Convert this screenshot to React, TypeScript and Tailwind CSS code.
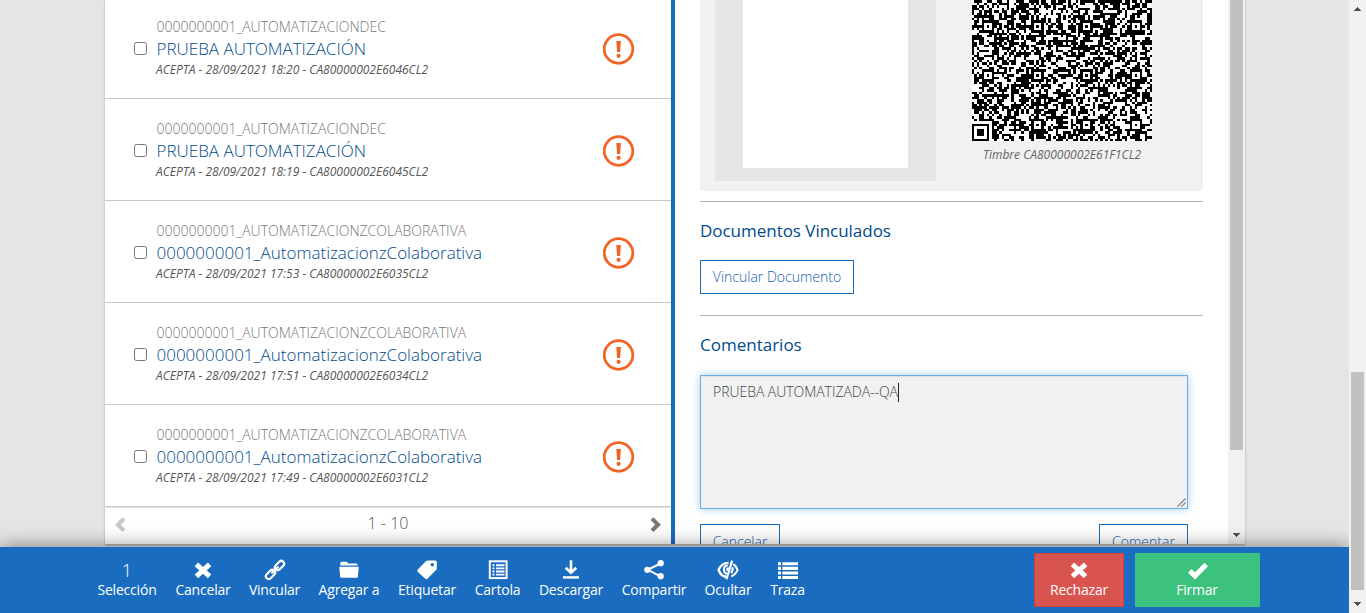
import type { ReactNode } from "react";

type Doc = { owner: string; title: string; meta: string };

const docs: Doc[] = [
  { owner: "0000000001_AUTOMATIZACIONDEC", title: "PRUEBA AUTOMATIZACIÓN", meta: "ACEPTA - 28/09/2021 18:20 - CA80000002E6046CL2" },
  { owner: "0000000001_AUTOMATIZACIONDEC", title: "PRUEBA AUTOMATIZACIÓN", meta: "ACEPTA - 28/09/2021 18:19 - CA80000002E6045CL2" },
  { owner: "0000000001_AUTOMATIZACIONZCOLABORATIVA", title: "0000000001_AutomatizacionzColaborativa", meta: "ACEPTA - 28/09/2021 17:53 - CA80000002E6035CL2" },
  { owner: "0000000001_AUTOMATIZACIONZCOLABORATIVA", title: "0000000001_AutomatizacionzColaborativa", meta: "ACEPTA - 28/09/2021 17:51 - CA80000002E6034CL2" },
  { owner: "0000000001_AUTOMATIZACIONZCOLABORATIVA", title: "0000000001_AutomatizacionzColaborativa", meta: "ACEPTA - 28/09/2021 17:49 - CA80000002E6031CL2" },
];

function AlertIcon() {
  return (
    <svg className="mt-[2px]" width="32" height="32" viewBox="0 0 32 32">
      <circle cx="15.5" cy="16" r="14.3" fill="none" stroke="#f26426" strokeWidth="2.8" />
      <path d="M13.3 8h4.6l-.8 11h-3z" fill="#f26426" />
      <circle cx="15.6" cy="22.8" r="2.1" fill="#f26426" />
    </svg>
  );
}

function DocRow({ doc }: { doc: Doc }) {
  return (
    <div className="flex h-[102px] shrink-0 items-center border-b border-[#c8c8c8] pl-[29px]">
      <span className="mt-px h-[13px] w-[13px] shrink-0 rounded-[2.5px] border border-[#767676] bg-white" />
      <div className="ml-[9px] w-[447px] whitespace-nowrap">
        <div className="pl-[0.5px] text-[14px] leading-[20px] font-light text-[#777]">{doc.owner}</div>
        <div className="pl-[0.5px] text-[17px] leading-[23px] font-light text-[#004b8d]">{doc.title}</div>
        <div className="pt-px text-[12px] leading-[18px] text-[#555] italic">{doc.meta}</div>
      </div>
      <AlertIcon />
    </div>
  );
}

const SIZE = 73;

function buildSeal(): string {
  const centers = [6, 26, 46, 66];
  let seed = 77123;
  const next = () => {
    seed = (seed * 1103515245 + 12345) & 0x7fffffff;
    return seed / 0x7fffffff;
  };
  let path = "";
  for (let y = 0; y < SIZE; y++) {
    for (let x = 0; x < SIZE; x++) {
      let dark = next() < 0.52;
      if (x === 6) dark = y % 2 === 0;
      for (const cx of centers) {
        for (const cy of centers) {
          const d = Math.max(Math.abs(x - cx), Math.abs(y - cy));
          if (d <= 2) dark = d !== 1;
        }
      }
      if (x <= 7 && y >= SIZE - 8) {
        const d = Math.max(Math.abs(x - 3), Math.abs(y - (SIZE - 4)));
        dark = d <= 1 || d === 3;
      }
      if (dark) path += `M${x} ${y}h1v1h-1z`;
    }
  }
  return path;
}

const sealPath = buildSeal();

function Seal() {
  return (
    <svg className="shrink-0 bg-white" width="180" height="180" viewBox="0 0 73 73" shapeRendering="crispEdges">
      <path d={sealPath} />
    </svg>
  );
}

function Cross() {
  return (
    <svg width="22" height="22" viewBox="0 0 22 22">
      <path d="M4.4 5.4 17.6 17.4M17.6 5.4 4.4 17.4" stroke="#fff" strokeWidth="5" fill="none" />
    </svg>
  );
}

function Check() {
  return (
    <svg width="22" height="22" viewBox="0 0 22 22">
      <path d="m2.8 11.9 5.2 5L19.2 5.6" stroke="#fff" strokeWidth="5" fill="none" />
    </svg>
  );
}

function Glyph({ children }: { children: ReactNode }) {
  return (
    <svg width="22" height="22" viewBox="0 0 22 22" fill="none" stroke="#fff">
      {children}
    </svg>
  );
}

const icons = {
  link: (
    <Glyph>
      <g strokeWidth="2.2" transform="rotate(-45 11 11)">
        <rect x="-.7" y="8.2" width="10.6" height="5.6" rx="2.8" />
        <rect x="12.1" y="8.2" width="10.6" height="5.6" rx="2.8" />
        <path d="M7 11h8" strokeLinecap="round" />
      </g>
    </Glyph>
  ),
  folder: (
    <Glyph>
      <path d="M2.3 6.6V4.2Q2.3 2.8 3.8 2.8h4.4q1 0 1.4.8l.4.8h8q1.5 0 1.5 1.4v.8z" fill="#fff" stroke="none" />
      <path d="M1.3 7.7h19.4l-.8 9.9q-.1 1.2-1.3 1.2H3.4q-1.2 0-1.3-1.2z" fill="#fff" stroke="none" />
    </Glyph>
  ),
  tag: (
    <Glyph>
      <path fillRule="evenodd" d="M12 1.4h7q1.8 0 1.8 1.8v6q0 1-.8 1.8l-8.3 8.6q-1.3 1.2-2.6 0L1.8 13q-1.2-1.2 0-2.5L10.1 2q.8-.6 1.9-.6zM16.3 4a1.7 1.7 0 1 0 .01 0z" fill="#fff" stroke="none" />
    </Glyph>
  ),
  card: (
    <Glyph>
      <rect x="2.8" y="2.3" width="16.8" height="16.8" strokeWidth="2" />
      <path d="M5.5 6.3h2M9 6.3h8.5M5.5 9.4h2M9 9.4h8.5M5.5 12.5h2M9 12.5h8.5M5.5 15.6h2M9 15.6h8.5" strokeWidth="1.9" />
    </Glyph>
  ),
  download: (
    <Glyph>
      <path d="M11 1.2v12M5.7 8.8l5.3 5 5.3-5" strokeWidth="2.6" />
      <path d="M3 18.4h16" strokeWidth="2.4" />
    </Glyph>
  ),
  share: (
    <Glyph>
      <path d="M17.5 4.5 4.8 10.8l12.7 6.5" strokeWidth="2" />
      <g fill="#fff" stroke="none">
        <circle cx="17.7" cy="4.2" r="3.1" />
        <circle cx="4.3" cy="10.8" r="3.1" />
        <circle cx="17.7" cy="17.2" r="3.1" />
      </g>
    </Glyph>
  ),
  hide: (
    <Glyph>
      <path d="M11.6 3.9Q4 4.2 1.6 11q2.4 6.2 7.4 6.8" strokeWidth="2.4" />
      <path d="M10.7 6.6q-4.2.5-3.8 4.7.4 2.9 3 3.4" strokeWidth="2" />
      <path d="M11.7 8.8q-2.2.5-1.6 3" strokeWidth="1.8" />
      <path d="M15.1 1.6 9.4 20.2" strokeWidth="2.2" />
      <path d="M16.2 5.2q3.4 2.1 4.4 5.8-1.6 4.2-6.4 6.4M15.2 8.2q1.4 3-1.2 5.8" strokeWidth="2.1" />
    </Glyph>
  ),
  list: (
    <Glyph>
      <path d="M1 4.8h3M5.3 4.8H21M1 9.4h3M5.3 9.4H21M1 14h3M5.3 14H21M1 18.5h3M5.3 18.5H21" strokeWidth="3.1" />
    </Glyph>
  ),
};

const actions: { label: string; icon: ReactNode; box: string }[] = [
  { label: "Selección", icon: <span className="text-[19px] leading-[20px] font-light">1</span>, box: "w-[78px]" },
  { label: "Cancelar", icon: <Cross />, box: "w-[74px]" },
  { label: "Vincular", icon: icons.link, box: "w-[69px]" },
  { label: "Agregar a", icon: icons.folder, box: "w-[80px]" },
  { label: "Etiquetar", icon: icons.tag, box: "w-[76px]" },
  { label: "Cartola", icon: icons.card, box: "w-[65px]" },
  { label: "Descargar", icon: icons.download, box: "w-[82px]" },
  { label: "Compartir", icon: icons.share, box: "w-[84px]" },
  { label: "Ocultar", icon: icons.hide, box: "w-[64px]" },
  { label: "Traza", icon: icons.list, box: "w-[55px]" },
];

function Arrow({ up }: { up?: boolean }) {
  return (
    <svg className="shrink-0" width="17" height="17" viewBox="0 0 17 17" shapeRendering="crispEdges">
      <path d={up ? "M5 11h7L8.5 7z" : "M5 6h7l-3.5 4z"} fill="#505050" />
    </svg>
  );
}

function ListPanel() {
  return (
    <section className="flex h-[544px] w-[566px] flex-col overflow-hidden bg-white">
      <div className="-mt-[3px] flex flex-col">
        {docs.map((d) => (
          <DocRow key={d.meta} doc={d} />
        ))}
      </div>
      <div className="flex h-[37px] items-center justify-between border-t border-[#e5e5e5] px-[9px] pb-[2px]">
        <svg width="13" height="16" viewBox="0 0 13 16">
          <path d="m9.9 1.7-6 6 6 6" stroke="#c8c8c8" strokeWidth="4" fill="none" />
        </svg>
        <span className="-mt-[4px] text-[16px] leading-6 font-light text-[#555]">1 - 10</span>
        <svg width="13" height="16" viewBox="0 0 13 16">
          <path d="m3 1.7 6 6-6 6" stroke="#777" strokeWidth="4" fill="none" />
        </svg>
      </div>
    </section>
  );
}

function OutlineButton({ label, box }: { label: string; box: string }) {
  return (
    <button className={`flex h-[34px] items-center justify-center border border-[#196cbf] text-[14px] font-light whitespace-nowrap text-[#1260b0] ${box}`}>
      {label}
    </button>
  );
}

function DetailPanel() {
  return (
    <section className="flex h-[544px] w-[553px] flex-col overflow-hidden bg-white pr-[25px] pl-[25px]">
      <div className="flex h-[191px] shrink-0 bg-[#f1f1f1] pl-[15px]">
        <div className="h-[181px] w-[221px] bg-[#e5e5e5] pl-[28px]">
          <div className="h-[168px] w-[165px] bg-white" />
        </div>
        <div className="ml-[36px] flex h-[191px] w-[180px] flex-col items-center">
          <div className="flex h-[141px] w-[180px] shrink-0 flex-col justify-end overflow-hidden">
            <Seal />
          </div>
          <div className="mt-[5px] text-[12px] leading-[18px] whitespace-nowrap text-[#666] italic">Timbre CA80000002E61F1CL2</div>
        </div>
      </div>
      <div className="mt-[10px] h-[115px] shrink-0 border-t border-[#b4b4b4] pt-[17px]">
        <h2 className="mb-[17px] text-[17px] leading-[24px] tracking-[-0.03px] text-[#004b8d]">Documentos Vinculados</h2>
        <OutlineButton label="Vincular Documento" box="w-[154px] pb-[2px]" />
      </div>
      <div className="-mt-px shrink-0 border-t border-[#b4b4b4] pt-[17px]">
        <h2 className="mb-[18px] text-[17px] leading-[24px] text-[#004b8d]">Comentarios</h2>
        <div className="flex h-[134px] w-[488px] flex-col justify-between border border-[#66afe9] bg-[#f1f1f1] shadow-[inset_0_1px_1px_rgba(0,0,0,0.075),0_0_8px_rgba(102,175,233,0.6)]">
          <div className="mt-[6px] ml-[12px] flex h-[20px] items-center text-[14px] leading-[20px] font-light tracking-[-0.04px] text-[#444]">
            PRUEBA AUTOMATIZADA--QA
            <span className="h-[19px] w-px bg-[#222]" />
          </div>
          <svg className="self-end" width="10" height="10" viewBox="0 0 10 10">
            <path d="M.5 8.5 8.5.5M4.5 8.5l4-4" stroke="#555" strokeWidth="1.1" strokeDasharray="1.2 .3" />
          </svg>
        </div>
        <div className="mt-[15px] flex w-[488px] justify-between">
          <OutlineButton label="Cancelar" box="w-[80px]" />
          <OutlineButton label="Comentar" box="w-[89px]" />
        </div>
      </div>
    </section>
  );
}

export default function App() {
  return (
    <div className="flex h-[613px] w-[1366px] overflow-hidden bg-[#e5e5e5] font-['Open_Sans',sans-serif]">
      <div className="flex h-[613px] w-[1349px] flex-col overflow-hidden">
        <main className="flex h-[547px] shrink-0 pl-[105px]">
          <div className="flex h-[544px] w-[1140px] shadow-[0_1px_2px_rgba(0,0,0,0.3)]">
            <ListPanel />
            <div className="w-[4px] bg-[#196cbf]" />
            <DetailPanel />
            <div className="flex w-[17px] flex-col justify-between bg-[#f1f1f1]">
              <div className="ml-[2px] h-[450px] w-[13px] bg-[#c1c1c1]" />
              <Arrow />
            </div>
          </div>
        </main>
        <footer className="relative flex h-[66px] shrink-0 bg-[#196cbf] pl-[88px] text-white shadow-[0_0_18px_rgba(0,0,0,0.5)]">
          <nav className="flex pt-[12px]">
            {actions.map((a) => (
              <div key={a.label} className={`flex flex-col items-center whitespace-nowrap ${a.box}`}>
                <span className="flex h-[22px] items-center justify-center">{a.icon}</span>
                <span className="text-[14px] leading-[18px] tracking-[-0.2px]">{a.label}</span>
              </div>
            ))}
          </nav>
          <div className="mt-[6px] ml-auto flex gap-[11px] pr-[89px]">
            <button className="flex h-[54px] w-[90px] flex-col items-center border border-[#d43f3a] bg-[#d9534f] pt-[5px]">
              <Cross />
              <span className="text-[14px] leading-[18px] tracking-[-0.2px]">Rechazar</span>
            </button>
            <button className="flex h-[54px] w-[125px] flex-col items-center bg-[#3dc27e] pt-[6px]">
              <Check />
              <span className="mr-px text-[14px] leading-[18px] tracking-[-0.2px]">Firmar</span>
            </button>
          </div>
        </footer>
      </div>
      <div className="flex w-[17px] flex-col bg-[#f1f1f1]">
        <Arrow up />
        <div className="mt-[355px] ml-[2px] h-[218px] w-[13px] bg-[#c1c1c1]" />
        <div className="mt-[6px]">
          <Arrow />
        </div>
      </div>
    </div>
  );
}
